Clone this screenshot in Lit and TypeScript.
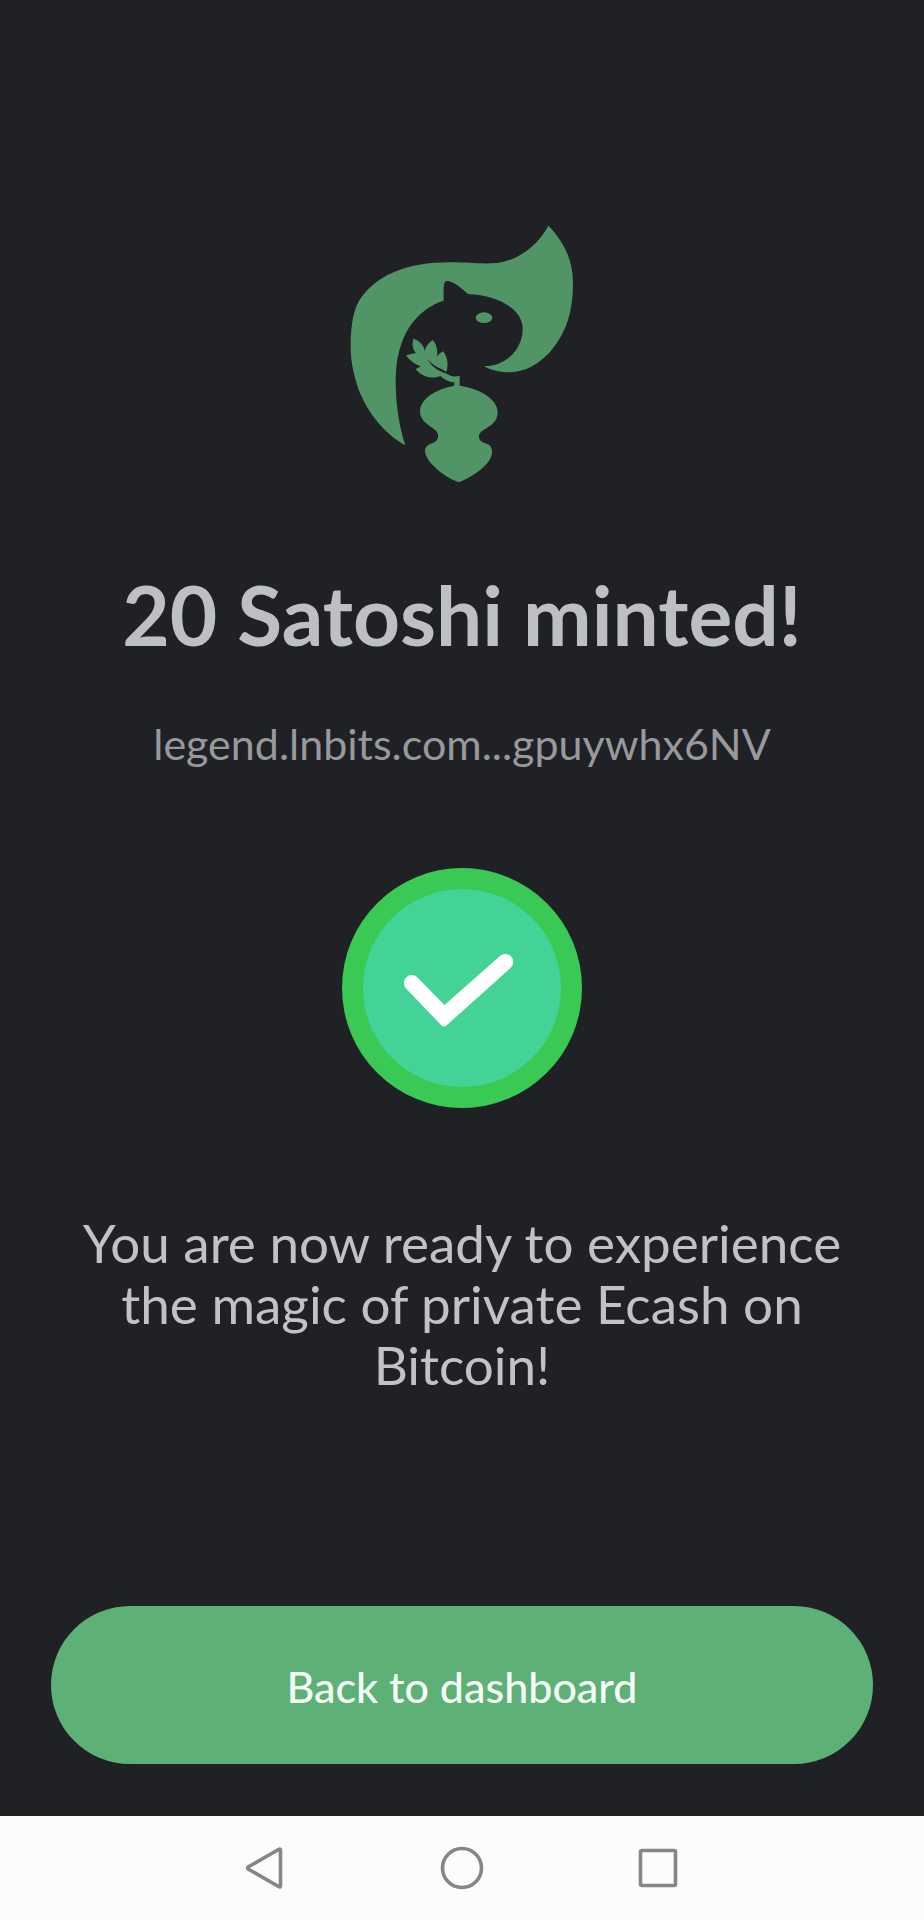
import { LitElement, html, css } from "lit";
import { customElement, property } from "lit/decorators.js";

@customElement("squirrel-logo")
class SquirrelLogo extends LitElement {
  static styles = css`
    :host { display: block; }
    .logo { display: block; width: 224px; height: 258px; fill: #519466; }
    .vein { fill: #202125; }
  `;
  render() {
    return html`
      <svg class="logo" viewBox="30 31 672 774" role="img" aria-label="Squirrel with acorn">
        <path d="M625 33 C670 78 699 135 699 205 C699 290 680 350 638 402 C600 448 555 473 503 473 C478 472 451 466 432 454 C490 456 548 410 548 343 C548 285 480 243 384 238 C364 220 340 199 320 199 C309 201 311 225 311 258 C260 273 214 315 190 372 C168 425 165 480 168 535 C171 600 184 655 196 692 C130 655 75 585 51 510 C35 455 32 430 32 385 C34 310 45 270 70 240 C120 180 200 143 330 143 C390 143 420 149 470 145 C535 138 595 90 625 33Z"/>
        <ellipse cx="432" cy="309" rx="25" ry="16"/>
        <path d="M220 372 C237 377 252 390 254 410 C256 396 267 383 279 376 C290 391 294 407 291 425 C296 418 304 413 309 410 C322 425 326 448 320 470 L313 472 C328 485 342 488 359 483 L359 513 C410 519 473 550 473 592 C473 620 453 632 437 642 C422 650 416 658 417 668 C419 681 430 684 442 688 C452 692 457 702 456 714 C453 750 400 785 356 803 C309 785 257 742 255 709 C255 698 262 691 272 687 C286 683 295 677 294 660 C292 646 277 640 264 630 C250 620 240 607 240 590 C241 550 290 523 343 513 L343 503 C326 503 312 493 301 484 C273 495 246 486 227 464 L242 455 C225 449 209 438 198 422 C208 419 219 417 228 414 C217 403 216 387 220 372Z"/>
        <path class="vein" d="M262 434 C278 450 294 460 312 467 L321 477 C292 470 274 453 262 434Z"/>
      </svg>
    `;
  }
}

@customElement("success-badge")
class SuccessBadge extends LitElement {
  static styles = css`
    :host { display: block; }
    .badge { display: block; width: 240px; height: 240px; }
    .ring { fill: #3bc955; }
    .disc { fill: #44d397; }
    .tick { fill: #fff; }
  `;
  render() {
    return html`
      <svg class="badge" viewBox="0 0 240 240" role="img" aria-label="Success">
        <circle class="ring" cx="120" cy="120" r="120"/>
        <circle class="disc" cx="120" cy="120" r="99"/>
        <path class="tick" d="M64 109.500 A8 8 0 0 1 75.500 109.500 L102.500 137 L158 88 A8 8 0 0 1 168.800 99.800 L105 157 Q102 160 99 157 L64 120.500 A8 8 0 0 1 64 109.500Z"/>
      </svg>
    `;
  }
}

@customElement("system-nav")
class SystemNav extends LitElement {
  static styles = css`
    :host { display: block; background: #fcfcfc; }
    .bar { display: flex; justify-content: center; align-items: center; gap: 148px; height: 104px; }
    .key { display: block; width: 48px; height: 48px; padding: 0; border: 0; background: none; }
    .glyph { display: block; width: 48px; height: 48px; fill: none; stroke: #868686; stroke-width: 3.6; stroke-linejoin: round; }
  `;
  render() {
    return html`
      <nav class="bar" aria-label="System navigation">
        <button class="key" aria-label="Back">
          <svg class="glyph" viewBox="0 0 48 48"><path d="M6.500 22.800 L37 5.300 Q38.500 4.600 38.500 6.500 V41.500 Q38.500 43.400 37 42.700 L6.500 25.200 Q4.500 24 6.500 22.800Z"/></svg>
        </button>
        <button class="key" aria-label="Home">
          <svg class="glyph" viewBox="0 0 48 48"><circle cx="24" cy="24" r="19.500"/></svg>
        </button>
        <button class="key" aria-label="Recent apps">
          <svg class="glyph" viewBox="0 0 48 48"><rect x="6.500" y="6.500" width="35" height="35" rx="1.500"/></svg>
        </button>
      </nav>
    `;
  }
}

@customElement("app-root")
class AppRoot extends LitElement {
  @property({ type: Number }) amount = 20;
  @property() token = "legend.lnbits.com...gpuywhx6NV";

  static styles = css`
    :host {
      display: flex;
      flex-direction: column;
      min-height: 100vh;
      background: #202125;
      font-family: Lato, "Open Sans", sans-serif;
    }
    .screen {
      flex: 1;
      display: flex;
      flex-direction: column;
      align-items: center;
      box-sizing: border-box;
      padding: 225px 51px 52px;
      text-align: center;
    }
    .title { margin: 83px 0 0; font-size: 82px; line-height: 96px; font-weight: 700; color: #bcbfc3; }
    .token { margin: 57px 0 0; font-size: 43px; line-height: 50px; color: #97999d; }
    .badge { margin-top: 99px; }
    .message { margin: 104px 0 52px; padding: 0 24px; font-size: 53px; line-height: 61px; color: #c0c2c6; }
    .action {
      width: 100%;
      height: 158px;
      margin-top: auto;
      padding: 4px 0 0;
      border: 0;
      border-radius: 79px;
      background: #5db176;
      color: #f6fff8;
      font-family: inherit;
      font-size: 43px;
      font-weight: 500;
      line-height: 50px;
    }
  `;

  render() {
    return html`
      <main class="screen">
        <squirrel-logo></squirrel-logo>
        <h1 class="title">${this.amount} Satoshi minted!</h1>
        <p class="token">${this.token}</p>
        <success-badge class="badge"></success-badge>
        <p class="message">You are now ready to experience the magic of private Ecash on Bitcoin!</p>
        <button class="action">Back to dashboard</button>
      </main>
      <system-nav></system-nav>
    `;
  }
}
